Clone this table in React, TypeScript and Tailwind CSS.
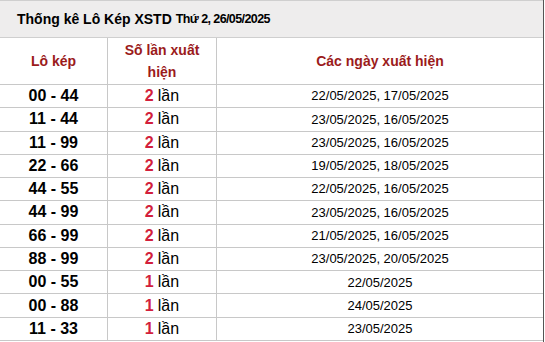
const rows: [string, number, string][] = [
  ['00 - 44', 2, '22/05/2025, 17/05/2025'],
  ['11 - 44', 2, '23/05/2025, 16/05/2025'],
  ['11 - 99', 2, '23/05/2025, 16/05/2025'],
  ['22 - 66', 2, '19/05/2025, 18/05/2025'],
  ['44 - 55', 2, '22/05/2025, 16/05/2025'],
  ['44 - 99', 2, '23/05/2025, 16/05/2025'],
  ['66 - 99', 2, '21/05/2025, 16/05/2025'],
  ['88 - 99', 2, '23/05/2025, 20/05/2025'],
  ['00 - 55', 1, '22/05/2025'],
  ['00 - 88', 1, '24/05/2025'],
  ['11 - 33', 1, '23/05/2025'],
];

export default function App() {
  return (
    <div className="w-[544px] h-[342px] overflow-hidden bg-white border-r border-r-[#555] font-['Liberation_Sans',Arial,sans-serif] text-black">
      {/* title bar */}
      <div className="h-[38px] flex items-center pl-[17px] bg-[#eeeded] border-t border-b border-[#cfcfcf]">
        <span className="text-[14px] font-bold">Thống kê Lô Kép XSTD</span>
        <span className="text-[12.5px] font-bold tracking-[-0.6px] ml-[4px]">Thứ 2, 26/05/2025</span>
      </div>

      <div className="grid grid-cols-[108px_109px_1fr] grid-rows-[47px] auto-rows-[23.27px]">
        <div className="flex items-center justify-center border-b border-r border-[#c8c8c8] text-[14px] font-bold text-[#9b1b1b]">
          Lô kép
        </div>
        <div className="flex items-center justify-center border-b border-r border-[#c8c8c8] text-[14px] font-bold text-[#9b1b1b] text-center leading-[22px] px-2">
          Số lần xuất hiện
        </div>
        <div className="flex items-center justify-center border-b border-[#c8c8c8] text-[14px] font-bold text-[#9b1b1b]">
          Các ngày xuất hiện
        </div>

        {rows.map(([pair, count, dates]) => (
          <div key={pair} className="contents">
            <div className="flex items-center justify-center border-b border-r border-[#c8c8c8] text-[16px] font-bold">
              {pair}
            </div>
            <div className="flex items-center justify-center border-b border-r border-[#c8c8c8] text-[16px]">
              <span className="font-bold text-[#d21f3c]">{count}</span>
              <span className="ml-[4px]">lần</span>
            </div>
            <div className="flex items-center justify-center border-b border-[#c8c8c8] text-[13px]">
              {dates}
            </div>
          </div>
        ))}
      </div>
    </div>
  );
}
